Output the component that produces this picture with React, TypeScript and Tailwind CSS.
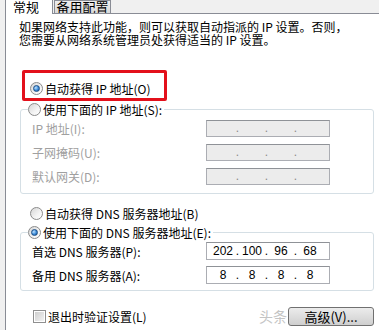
/**
 * IPv4 properties dialog (Windows 7 style), "常规" tab.
 */

function Radio({ checked, disabled }: { checked?: boolean; disabled?: boolean }) {
  return (
    <span
      className={`flex h-[13px] w-[13px] shrink-0 items-center justify-center rounded-full border ${
        disabled ? 'border-[#b9b9b9]' : 'border-[#8b8b8b]'
      } bg-[linear-gradient(135deg,#d6d6d6,#f4f4f4_60%,#ffffff)]`}
    >
      {checked && (
        <span className="h-[7px] w-[7px] rounded-full border border-[#1d4f86] bg-[radial-gradient(circle_at_35%_35%,#bfe3ff,#3a8ad8_55%,#11457f)]" />
      )}
    </span>
  );
}

function RadioRow({ label, checked }: { label: string; checked?: boolean }) {
  return (
    <div className="flex h-[13px] items-center gap-[2px] whitespace-nowrap">
      <Radio checked={checked} />
      <span>{label}</span>
    </div>
  );
}

/** Four-part address box; empty parts show only the dots */
function IpBox({ parts, disabled }: { parts: string[]; disabled?: boolean }) {
  return (
    <div
      className={`flex w-[124px] items-center border border-[#abadb3] border-t-[#8f9297] pl-[4px] font-['Liberation_Sans',sans-serif] text-[12px] ${
        disabled ? 'h-[17px] bg-[#ececec] text-[#8a8a8a]' : 'h-[18px] bg-white text-black'
      }`}
    >
      {parts.map((p, i) => (
        <div key={i} className="flex w-[29px] items-center">
          <span className="w-[24px] text-center">{p}</span>
          {i < 3 && <span className="w-[5px] text-center">.</span>}
        </div>
      ))}
    </div>
  );
}

function FieldRow({ label, children, gray }: { label: string; children: React.ReactNode; gray?: boolean }) {
  return (
    <div className="flex items-center">
      <span className={`w-[174px] whitespace-nowrap ${gray ? 'text-[#a0a0a0]' : ''}`}>{label}</span>
      {children}
    </div>
  );
}

export default function App() {
  const empty = ['', '', '', ''];

  return (
    <div className="h-[330px] w-[379px] overflow-hidden bg-[#f0f0f0] font-['Noto_Sans_CJK_SC',sans-serif] text-[12px] leading-[13px] text-black">
      {/* Tab strip */}
      <div className="flex h-[13px] items-end">
        <div className="w-[5px]" />
        <div className="relative z-10 -mb-[1px] h-[14px] w-[48px] overflow-hidden border-x border-[#898c95] bg-white pl-[7px]">
          <span className="block text-[13px] leading-[13px]">常规</span>
        </div>
        <div className="ml-[1px] h-[13px] w-[57px] overflow-hidden border border-b-0 border-[#898c95] bg-[linear-gradient(#eeeeee,#d9d9d9)] text-center">
          <span className="block text-[13px] leading-[12px]">备用配置</span>
        </div>
      </div>

      {/* Tab page */}
      <div className="ml-[5px] h-[317px] border-l border-t border-[#898c95] bg-white">
        <p className="whitespace-nowrap pl-[13px] pt-[6px]">
          如果网络支持此功能，则可以获取自动指派的 IP 设置。否则，
          <br />
          您需要从网络系统管理员处获得适当的 IP 设置。
        </p>

        <div className="ml-[14px] w-[354px]">
          {/* Annotated option */}
          <div className="relative ml-[10px] mt-[36px]">
            <RadioRow label="自动获得 IP 地址(O)" checked />
            <div className="absolute -left-[8px] -top-[12px] h-[31px] w-[145px] rounded-[2px] border-[3px] border-[#e3101b]" />
          </div>

          <fieldset className="mt-[8px] rounded-[3px] border border-[#d5dfe5] pb-[8px] pt-[4px]">
            <legend className="ml-[7px] pr-[2px]">
              <RadioRow label="使用下面的 IP 地址(S):" />
            </legend>
            <div className="flex flex-col gap-[7px] pl-[11px]">
              <FieldRow label="IP 地址(I):" gray>
                <IpBox parts={empty} disabled />
              </FieldRow>
              <FieldRow label="子网掩码(U):" gray>
                <IpBox parts={empty} disabled />
              </FieldRow>
              <FieldRow label="默认网关(D):" gray>
                <IpBox parts={empty} disabled />
              </FieldRow>
            </div>
          </fieldset>

          <div className="ml-[10px] mt-[13px]">
            <RadioRow label="自动获得 DNS 服务器地址(B)" />
          </div>

          <fieldset className="mt-[6px] rounded-[3px] border border-[#d5dfe5] pb-[6px] pt-[3px]">
            <legend className="ml-[7px] pr-[2px]">
              <RadioRow label="使用下面的 DNS 服务器地址(E):" checked />
            </legend>
            <div className="flex flex-col gap-[6px] pl-[11px]">
              <FieldRow label="首选 DNS 服务器(P):">
                <IpBox parts={['202', '100', '96', '68']} />
              </FieldRow>
              <FieldRow label="备用 DNS 服务器(A):">
                <IpBox parts={['8', '8', '8', '8']} />
              </FieldRow>
            </div>
          </fieldset>
        </div>

        {/* Footer */}
        <div className="ml-[27px] mt-[15px] flex h-[20px] w-[341px] items-center justify-between">
          <label className="flex items-center gap-[2px] whitespace-nowrap">
            <span className="flex h-[13px] w-[13px] items-center justify-center border border-[#8f8f8f] bg-white">
              <span className="h-[9px] w-[9px] bg-[linear-gradient(135deg,#cfcfcf,#f2f2f2)]" />
            </span>
            <span>退出时验证设置(L)</span>
          </label>
          <div className="flex items-center">
            <span className="mr-[1px] text-[14px] text-[#c4c4c4]">头条</span>
            <button
              type="button"
              className="h-[19px] w-[86px] rounded-[3px] border border-[#707070] bg-[linear-gradient(#ececec,#cfcfcf)] text-[13px] leading-[17px]"
            >
              高级(V)...
            </button>
          </div>
        </div>
      </div>
    </div>
  );
}
